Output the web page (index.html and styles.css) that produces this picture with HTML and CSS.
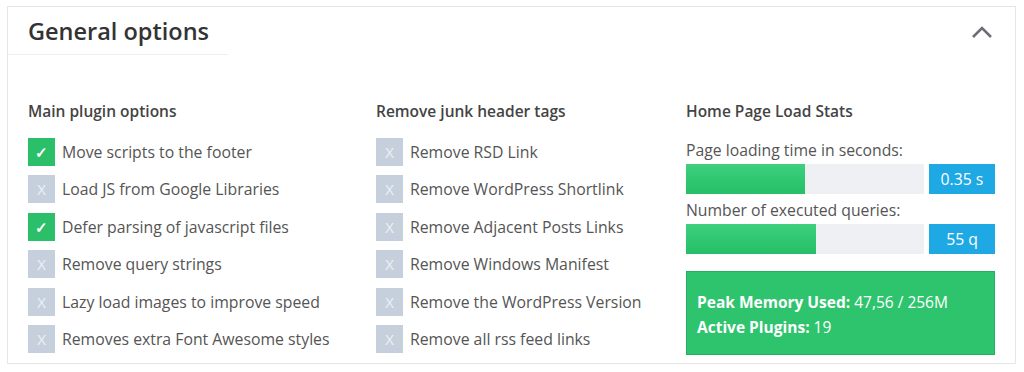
FILE: index.html
```html
<!DOCTYPE html>
<html>
<head>
<meta charset="utf-8">
<link rel="stylesheet" href="styles.css">
</head>
<body>
<div class="card">
  <div class="card-head">
    <h2 class="title">General options</h2>
    <svg class="chevron" width="22" height="14" viewBox="0 0 22 14"><polyline points="2,12 11,3 20,12" fill="none" stroke="#6b6f75" stroke-width="2.6"/></svg>
  </div>
  <div class="card-body">
    <div class="col">
      <h3 class="col-title">Main plugin options</h3>
      <ul class="opts">
        <li class="opt"><span class="box on">&#10003;</span>Move scripts to the footer</li>
        <li class="opt"><span class="box off">X</span>Load JS from Google Libraries</li>
        <li class="opt"><span class="box on">&#10003;</span>Defer parsing of javascript files</li>
        <li class="opt"><span class="box off">X</span>Remove query strings</li>
        <li class="opt"><span class="box off">X</span>Lazy load images to improve speed</li>
        <li class="opt"><span class="box off">X</span>Removes extra Font Awesome styles</li>
      </ul>
    </div>
    <div class="col">
      <h3 class="col-title">Remove junk header tags</h3>
      <ul class="opts">
        <li class="opt"><span class="box off">X</span>Remove RSD Link</li>
        <li class="opt"><span class="box off">X</span>Remove WordPress Shortlink</li>
        <li class="opt"><span class="box off">X</span>Remove Adjacent Posts Links</li>
        <li class="opt"><span class="box off">X</span>Remove Windows Manifest</li>
        <li class="opt"><span class="box off">X</span>Remove the WordPress Version</li>
        <li class="opt"><span class="box off">X</span>Remove all rss feed links</li>
      </ul>
    </div>
    <div class="col">
      <h3 class="col-title">Home Page Load Stats</h3>
      <div class="stat-label">Page loading time in seconds:</div>
      <div class="stat-row">
        <div class="bar"><div class="fill" style="width:50%"></div></div>
        <div class="badge">0.35 s</div>
      </div>
      <div class="stat-label">Number of executed queries:</div>
      <div class="stat-row">
        <div class="bar"><div class="fill" style="width:54.6%"></div></div>
        <div class="badge">55 q</div>
      </div>
      <div class="mem">
        <div><b>Peak Memory Used:</b> 47,56 / 256M</div>
        <div><b>Active Plugins:</b> 19</div>
      </div>
    </div>
  </div>
</div>
</body>
</html>
```
FILE: styles.css
```css
html, body {
  margin: 0;
  padding: 0;
  background: #fff;
}
body {
  font-family: "Open Sans", "Liberation Sans", sans-serif;
  color: #555;
  padding: 6px 0 0 7px;
}
.card {
  width: 1007px;
  height: 356px;
  border: 1px solid #e6e6e6;
  background: #fff;
}
.card-head {
  display: flex;
  justify-content: space-between;
  align-items: center;
  height: 48px;
}
.title {
  box-sizing: border-box;
  margin: 0;
  width: 220px;
  height: 48px;
  padding: 0 0 0 20px;
  line-height: 49px;
  white-space: nowrap;
  font-size: 23.5px;
  font-weight: 600;
  color: #333;
  border-bottom: 1px solid #eeeeee;
}
.chevron {
  margin: 2px 22px 0 0;
}
.card-body {
  display: grid;
  grid-template-columns: 348px 310px 309px;
  padding: 0 0 0 20px;
}
.col-title {
  margin: 44px 0 0;
  height: 24px;
  line-height: 24px;
  font-size: 15.5px;
  font-weight: 600;
  color: #444;
}
.opts {
  list-style: none;
  margin: 15px 0 0;
  padding: 0;
  display: flex;
  flex-direction: column;
  gap: 9.4px;
}
.opt {
  display: flex;
  align-items: center;
  height: 28px;
  font-size: 15.8px;
  color: #555;
}
.box {
  width: 27px;
  height: 28px;
  margin-right: 7px;
  display: flex;
  align-items: center;
  justify-content: center;
  color: #fff;
  font-size: 15px;
  flex: none;
}
.box.on {
  background: #2bbf6a;
  font-weight: 700;
}
.box.off {
  background: #c6d0dc;
  color: #edf1f5;
  font-weight: 400;
}
.stat-label {
  font-size: 15.75px;
  color: #555;
  line-height: 21px;
}
.col-title + .stat-label {
  margin-top: 17px;
}
.stat-row {
  display: flex;
  gap: 5px;
  height: 30px;
  margin: 3px 0 6px;
}
.bar {
  width: 238px;
  height: 30px;
  background: #eef0f3;
}
.fill {
  height: 100%;
  background: linear-gradient(#3ed07d, #25bf67);
}
.badge {
  width: 66px;
  height: 30px;
  background: #1ea8e4;
  color: #fff;
  font-size: 15.75px;
  display: flex;
  align-items: center;
  justify-content: center;
}
.mem {
  margin-top: 17px;
  width: 287px;
  height: 72px;
  padding: 7px 10px 3px 10px;
  background: #2ec46e;
  border: 1px solid #27ad5f;
  color: #fff;
  font-size: 15.5px;
  line-height: 25px;
  display: flex;
  flex-direction: column;
  justify-content: center;
}
.mem b {
  font-weight: 700;
}
```
